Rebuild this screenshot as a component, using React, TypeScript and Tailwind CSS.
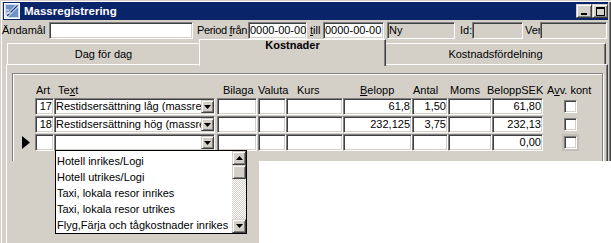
import type { ReactNode } from 'react'

const sunken =
    'border border-t-[#808080] border-l-[#808080] border-r-white border-b-white shadow-[inset_1px_1px_0_#404040,inset_-1px_-1px_0_#d4d0c8]'
const raised =
    'border border-t-[#d4d0c8] border-l-[#d4d0c8] border-r-[#404040] border-b-[#404040] shadow-[inset_1px_1px_0_#ffffff,inset_-1px_-1px_0_#808080]'

function Field({
    className = '',
    children,
    right = false,
}: {
    className?: string
    children?: ReactNode
    right?: boolean
}) {
    return (
        <div
            className={`${sunken} ${className} flex h-[17px] shrink-0 items-center overflow-hidden whitespace-nowrap px-[1px] ${right ? 'justify-end' : ''}`}
        >
            {children}
        </div>
    )
}

function Caret({ up = false }: { up?: boolean }) {
    return (
        <svg width="7" height="4" viewBox="0 0 7 4" className="block">
            {up ? <path d="M3.5 0L7 4H0z" /> : <path d="M0 0h7L3.5 4z" />}
        </svg>
    )
}

function AppIcon() {
    return (
        <svg width="16" height="16" viewBox="0 0 16 16" className="block shrink-0">
            <rect x="0.5" y="0.5" width="15" height="15" fill="#c9daf2" stroke="#ffffff" />
            <rect x="2" y="2" width="12" height="12" fill="#6f93c8" />
            <path d="M2 14L13 3" stroke="#ffffff" strokeWidth="3" />
            <path d="M3 13L13 3" stroke="#1c3c78" strokeWidth="1.5" />
            <path d="M2 10h5M2 7h3" stroke="#ffffff" strokeWidth="1" />
        </svg>
    )
}

function TitleButton({ kind }: { kind: 'min' | 'max' }) {
    return (
        <div
            className={`${raised} flex h-[14px] w-[16px] items-center justify-center bg-[#d4d0c8]`}
        >
            {kind === 'min' ? (
                <div className="mt-[6px] h-[2px] w-[6px] bg-black" />
            ) : (
                <div className="h-[9px] w-[9px] border border-t-2 border-black" />
            )}
        </div>
    )
}

function ComboCell({ text }: { text: string }) {
    return (
        <div className={`${sunken} flex h-[17px] w-[161px] shrink-0 items-center bg-white`}>
            <span className="min-w-0 flex-1 overflow-hidden whitespace-nowrap pl-[1px]">
                {text}
            </span>
            <div
                className={`${raised} flex h-[13px] w-[13px] shrink-0 items-center justify-center bg-[#d4d0c8]`}
            >
                <Caret />
            </div>
        </div>
    )
}

function CheckBox({ focused = false }: { focused?: boolean }) {
    const box = <div className={`${sunken} h-[13px] w-[13px] bg-white`} />
    if (!focused) return <div className="ml-[21px]">{box}</div>
    return <div className="ml-[19px] bg-[#c2bfb8] p-[2px]">{box}</div>
}

const rows = [
    {
        art: '17',
        text: 'Restidsersättning låg (massregistrering)',
        belopp: '61,8',
        antal: '1,50',
        sek: '61,80',
        current: false,
    },
    {
        art: '18',
        text: 'Restidsersättning hög (massregistrering)',
        belopp: '232,125',
        antal: '3,75',
        sek: '232,13',
        current: false,
    },
    { art: '', text: '', belopp: '', antal: '', sek: '0,00', current: true },
]

const listItems = [
    'Hotell inrikes/Logi',
    'Hotell utrikes/Logi',
    'Taxi, lokala resor inrikes',
    'Taxi, lokala resor utrikes',
    'Flyg,Färja och tågkostnader inrikes',
]

export default function App() {
    return (
        <div className="relative h-[243px] w-[611px] overflow-hidden bg-white font-['Liberation_Sans',Arial,sans-serif] text-[11px] leading-[13px] text-black">
            {/* window */}
            <div className="flex h-[161px] flex-col overflow-hidden bg-[#d4d0c8] pl-[3px] pr-[3px] pt-[2px] shadow-[inset_1px_1px_0_#d4d0c8,inset_2px_2px_0_#ffffff,inset_-1px_0_0_#404040,inset_-2px_0_0_#808080]">
                <div className="flex h-[18px] shrink-0 items-center bg-[#0a246a] pl-[1px]">
                    <AppIcon />
                    <span className="ml-[4px] pt-[1px] text-[11.5px] font-bold text-white">
                        Massregistrering
                    </span>
                    <div className="ml-auto flex">
                        <TitleButton kind="min" />
                        <TitleButton kind="max" />
                    </div>
                </div>

                <div className="-ml-[1px] mt-[2px] flex h-[17px] shrink-0 items-center whitespace-nowrap">
                    <span className="w-[47px] shrink-0">Ändamål</span>
                    <Field className="w-[144px] bg-white" />
                    <span className="ml-[4px] w-[51px] shrink-0 tracking-[-0.35px]">
                        Period <span className="underline">f</span>rån
                    </span>
                    <Field className="w-[59px] bg-white">0000-00-00</Field>
                    <span className="ml-[3px] w-[13px] shrink-0">
                        <span className="underline">t</span>ill
                    </span>
                    <Field className="w-[61px] bg-white">0000-00-00</Field>
                    <Field className="ml-[3px] w-[68px] bg-[#d4d0c8]">Ny</Field>
                    <span className="ml-[5px] w-[12px] shrink-0">Id:</span>
                    <Field className="w-[51px] bg-[#d4d0c8]" />
                    <span className="ml-[2px] w-[15px] shrink-0">Ver</span>
                    <Field className="w-[67px] bg-[#d4d0c8]" />
                </div>

                {/* tabs */}
                <div className="flex h-[25px] shrink-0 items-end">
                    <div className="ml-[4px] flex h-[21px] w-[192px] items-center justify-center border-l border-t border-white">
                        Dag för dag
                    </div>
                    <div className="relative z-10 -mb-[2px] flex h-[27px] w-[187px] justify-center border-l border-r border-t border-white border-r-[#404040] bg-[#d4d0c8] font-bold leading-[11px] shadow-[inset_-1px_0_0_#808080]">
                        Kostnader
                    </div>
                    <div className="flex h-[21px] w-[220px] items-center justify-center border-r border-t border-white border-r-[#404040] shadow-[inset_-1px_0_0_#808080]">
                        Kostnadsfördelning
                    </div>
                </div>

                {/* tab panel */}
                <div className="ml-[3px] flex-1 border-l border-r border-t border-white border-r-[#404040] shadow-[inset_-1px_0_0_#808080]">
                    <div className="ml-[5px] mt-[8px] h-[120px] w-[591px] border border-[#808080] shadow-[inset_1px_1px_0_#ffffff,1px_1px_0_#ffffff]">
                        <div className="mt-[10px] flex h-[13px] whitespace-nowrap pl-[23px]">
                            <span className="w-[22px] shrink-0">Art</span>
                            <span className="w-[165px] shrink-0">
                                Te<span className="underline">x</span>t
                            </span>
                            <span className="w-[35px] shrink-0">Bilaga</span>
                            <span className="w-[39px] shrink-0">Valuta</span>
                            <span className="w-[63px] shrink-0">Kurs</span>
                            <span className="w-[53px] shrink-0">
                                <span className="underline">B</span>elopp
                            </span>
                            <span className="w-[37px] shrink-0">Antal</span>
                            <span className="w-[37px] shrink-0">Moms</span>
                            <span className="w-[60px] shrink-0">BeloppSEK</span>
                            <span className="shrink-0">
                                A<span className="underline">v</span>v. kont
                            </span>
                        </div>

                        {rows.map((row, i) => (
                            <div key={i} className="mt-[1px] flex h-[17px] items-center">
                                <div className="flex w-[22px] shrink-0 pl-[9px]">
                                    {row.current && (
                                        <svg width="8" height="13" viewBox="0 0 8 13" className="block">
                                            <path d="M0 0L8 6.5L0 13z" />
                                        </svg>
                                    )}
                                </div>
                                <Field className="w-[19px] bg-white" right>
                                    {row.art}
                                </Field>
                                <ComboCell text={row.text} />
                                <Field className="ml-[2px] w-[40px] bg-white" />
                                <Field className="ml-[1px] w-[28px] bg-white" />
                                <Field className="w-[57px] bg-white" />
                                <Field className="w-[69px] bg-white" right>
                                    {row.belopp}
                                </Field>
                                <Field className="w-[36px] bg-white" right>
                                    {row.antal}
                                </Field>
                                <Field className="w-[44px] bg-white" />
                                <Field className="w-[51px] bg-white" right>
                                    {row.sek}
                                </Field>
                                <CheckBox focused={row.current} />
                            </div>
                        ))}
                    </div>
                </div>
            </div>

            {/* lower part of screenshot */}
            <div className="flex h-[82px]">
                <div className="w-[259px] bg-[#d4d0c8] pl-[6px] shadow-[inset_1px_0_0_#d4d0c8,inset_2px_0_0_#ffffff]">
                    <div className="h-full border-l border-white" />
                </div>
            </div>

            {/* open combo list */}
            <div className="absolute left-[55px] top-[150px] z-20 flex h-[84px] w-[192px] border border-black bg-white">
                <div className="min-w-0 flex-1 pl-[1px] pt-[2px]">
                    {listItems.map((item) => (
                        <div key={item} className="h-[16px] whitespace-nowrap leading-[16px]">
                            {item}
                        </div>
                    ))}
                </div>
                <div className="flex w-[14px] flex-col">
                    <div className={`${raised} flex h-[14px] items-center justify-center bg-[#d4d0c8]`}>
                        <Caret up />
                    </div>
                    <div className={`${raised} h-[14px] bg-[#d4d0c8]`} />
                    <div className="flex-1 bg-[repeating-conic-gradient(#ffffff_0%_25%,#d4d0c8_0%_50%)] bg-[length:2px_2px]" />
                    <div className={`${raised} flex h-[14px] items-center justify-center bg-[#d4d0c8]`}>
                        <Caret />
                    </div>
                </div>
            </div>
        </div>
    )
}
